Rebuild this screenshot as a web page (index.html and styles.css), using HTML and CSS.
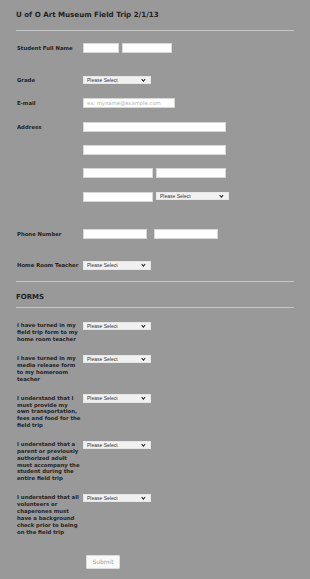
FILE: index.html
```html
<!DOCTYPE html>
<html lang="en">
<head>
    <meta charset="UTF-8">
    <meta name="viewport" content="width=device-width, initial-scale=1.0">
    <title>U of O Art Museum Field Trip 2/1/13</title>
    <link rel="stylesheet" href="styles.css">
</head>
<body>
    <form class="form">
        <h1 class="form-title">U of O Art Museum Field Trip 2/1/13</h1>
        <hr class="divider">

        <div class="row row-name">
            <label class="label">Student Full Name</label>
            <div class="controls">
                <input type="text" class="input w-first">
                <input type="text" class="input w-last">
            </div>
        </div>

        <div class="row row-grade">
            <label class="label label-sel">Grade</label>
            <span class="select-wrap w-sel"><select class="select"><option>Please Select</option></select></span>
        </div>

        <div class="row row-email">
            <label class="label">E-mail</label>
            <input type="email" class="input w-email" placeholder="ex: myname@example.com">
        </div>

        <div class="row row-address">
            <label class="label">Address</label>
            <div class="address">
                <input type="text" class="input w-full">
                <input type="text" class="input w-full">
                <div class="pair">
                    <input type="text" class="input w-half">
                    <input type="text" class="input w-half">
                </div>
                <div class="pair">
                    <input type="text" class="input w-half">
                    <span class="select-wrap w-country"><select class="select"><option>Please Select</option></select></span>
                </div>
            </div>
        </div>

        <div class="row row-phone">
            <label class="label">Phone Number</label>
            <div class="controls">
                <input type="text" class="input w-phone">
                <span class="dash">-</span>
                <input type="text" class="input w-phone">
            </div>
        </div>

        <div class="row row-teacher">
            <label class="label label-sel">Home Room Teacher</label>
            <span class="select-wrap w-sel"><select class="select"><option>Please Select</option></select></span>
        </div>

        <hr class="divider divider-forms">
        <h2 class="section-title">FORMS</h2>
        <hr class="divider divider-section">

        <div class="row q-row q-first">
            <label class="label q-label">I have turned in my field trip form to my home room teacher</label>
            <span class="select-wrap w-sel"><select class="select"><option>Please Select</option></select></span>
        </div>
        <div class="row q-row">
            <label class="label q-label">I have turned in my media release form to my homeroom teacher</label>
            <span class="select-wrap w-sel"><select class="select"><option>Please Select</option></select></span>
        </div>
        <div class="row q-row">
            <label class="label q-label">I understand that I must provide my own transportation, fees and food for the field trip</label>
            <span class="select-wrap w-sel"><select class="select"><option>Please Select</option></select></span>
        </div>
        <div class="row q-row">
            <label class="label q-label">I understand that a parent or previously authorized adult must accompany the student during the entire field trip</label>
            <span class="select-wrap w-sel"><select class="select"><option>Please Select</option></select></span>
        </div>
        <div class="row q-row">
            <label class="label q-label">I understand that all volunteers or chaperones must have a background check prior to being on the field trip</label>
            <span class="select-wrap w-sel"><select class="select"><option>Please Select</option></select></span>
        </div>

        <div class="actions">
            <button type="button" class="submit">Submit</button>
        </div>
    </form>
</body>
</html>
```

FILE: styles.css
```css
body {
    margin: 0;
    background: #999999;
    font-family: "DejaVu Sans", Verdana, sans-serif;
    color: #1f1f1f;
}
.form {
    padding: 10px 16px 0 16px;
}
.form-title {
    margin: 0;
    font-size: 7.1px;
    line-height: 10px;
    font-weight: bold;
    color: #222;
}
.divider {
    margin: 0;
    border: none;
    border-top: 1px solid #c6c6c6;
}
.form-title + .divider {
    margin-top: 9.5px;
}
.section-title {
    margin: 9.5px 0 0 0;
    font-size: 7px;
    line-height: 10px;
    font-weight: bold;
    color: #222;
}
.divider-forms {
    margin-top: 11.3px;
}
.divider-section {
    margin-top: 5px;
}

.row {
    display: flex;
    align-items: flex-start;
}
.label {
    width: 67px;
    flex-shrink: 0;
    padding-left: 1px;
    box-sizing: border-box;
    font-size: 5.33px;
    font-weight: bold;
    line-height: 10px;
    white-space: nowrap;
}
.label-sel {
    line-height: 8.6px;
}
.controls {
    display: flex;
    align-items: center;
}
.address {
    display: flex;
    flex-direction: column;
    gap: 13.4px;
}
.pair {
    display: flex;
    gap: 3px;
}

.row-name { margin-top: 12.5px; }
.row-grade { margin-top: 22.7px; }
.row-email { margin-top: 13.7px; }
.row-address { margin-top: 13.4px; }
.row-phone { margin-top: 27px; }
.row-teacher { margin-top: 22.3px; }

.input {
    box-sizing: border-box;
    height: 10px;
    margin: 0;
    padding: 0 3px;
    border: 1px solid #d8d8d8;
    background: #fff;
    font-family: "DejaVu Sans", Verdana, sans-serif;
    font-size: 5.27px;
    color: #333;
    outline: none;
}
.input::placeholder {
    color: #b2b2b2;
}
.controls .input + .input {
    margin-left: 3px;
}
.w-first { width: 36px; }
.w-last { width: 50px; }
.w-email { width: 92px; height: 10.3px; }
.w-full { width: 143px; }
.w-half { width: 70px; }
.w-phone { width: 64px; }
.dash {
    width: 7px;
    text-align: center;
    font-size: 5px;
    line-height: 10px;
    color: #c4c4c4;
}

.select-wrap {
    position: relative;
    display: block;
    height: 8.6px;
}
.select-wrap::after {
    content: "";
    position: absolute;
    right: 6px;
    top: 2.2px;
    width: 1.8px;
    height: 1.8px;
    border-right: 1px solid #222;
    border-bottom: 1px solid #222;
    transform: rotate(45deg);
    pointer-events: none;
}
.select {
    display: block;
    appearance: none;
    -webkit-appearance: none;
    box-sizing: border-box;
    width: 100%;
    height: 8.6px;
    margin: 0;
    padding: 0 0 0 3px;
    border: 1px solid #e6e6e6;
    border-radius: 0;
    background: #f1f1f1;
    font-family: "Liberation Sans", Arial, sans-serif;
    font-size: 5px;
    line-height: 6.6px;
    color: #333;
}
.w-sel { width: 68px; }
.w-country { width: 72.7px; }

.q-row { margin-top: 11.6px; }
.q-first { margin-top: 14.3px; }
.q-label {
    padding-right: 2px;
    padding-top: 0.6px;
    line-height: 6.85px;
    white-space: normal;
}

.actions {
    margin-top: 13.5px;
    padding-left: 70px;
}
.submit {
    width: 34px;
    height: 13.5px;
    padding: 0;
    border: 1px solid #dcdcdc;
    border-radius: 1px;
    background: #f9f9f9;
    font-family: "DejaVu Sans", Verdana, sans-serif;
    font-size: 5.9px;
    color: #a0a0a0;
}
```
